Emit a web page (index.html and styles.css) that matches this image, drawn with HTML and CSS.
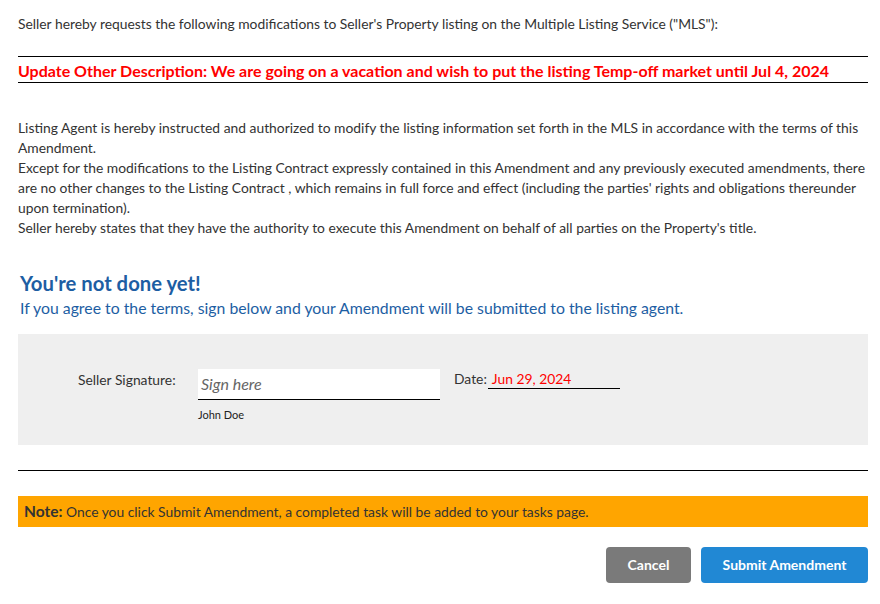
FILE: index.html
```html
<!DOCTYPE html>
<html>
<head>
<meta charset="utf-8">
<link rel="stylesheet" href="styles.css">
</head>
<body>
<div class="page">
  <p class="intro">Seller hereby requests the following modifications to Seller's Property listing on the Multiple Listing Service ("MLS"):</p>
  <div class="update">Update Other Description: We are going on a vacation and wish to put the listing Temp-off market until Jul 4, 2024</div>
  <div class="terms">
    <p>Listing Agent is hereby instructed and authorized to modify the listing information set forth in the MLS in accordance with the terms of this Amendment.</p>
    <p>Except for the modifications to the Listing Contract expressly contained in this Amendment and any previously executed amendments, there are no other changes to the Listing Contract , which remains in full force and effect (including the parties' rights and obligations thereunder upon termination).</p>
    <p>Seller hereby states that they have the authority to execute this Amendment on behalf of all parties on the Property's title.</p>
  </div>
  <h2 class="title">You're not done yet!</h2>
  <p class="subtitle">If you agree to the terms, sign below and your Amendment will be submitted to the listing agent.</p>
  <div class="signbox">
    <div class="sig-label">Seller Signature:</div>
    <div class="sig-field">
      <div class="sig-input">Sign here</div>
      <div class="sig-name">John Doe</div>
    </div>
    <div class="date-label">Date:</div>
    <div class="date-value">Jun 29, 2024</div>
  </div>
  <hr class="rule">
  <div class="note"><b>Note:</b> Once you click Submit Amendment, a completed task will be added to your tasks page.</div>
  <div class="actions">
    <button class="btn btn-cancel">Cancel</button>
    <button class="btn btn-submit">Submit Amendment</button>
  </div>
</div>
</body>
</html>
```

FILE: styles.css
```css
* { box-sizing: border-box; }
html, body { margin: 0; padding: 0; background: #fff; }
body {
  font-family: Lato, "Open Sans", sans-serif;
  color: #333;
  font-size: 13.85px;
}
.page {
  padding: 14px 12px 0 18px;
}
.intro {
  margin: 0;
  line-height: 20px;
  padding-bottom: 22px;
  border-bottom: 1px solid #000;
}
.update {
  color: #ff0000;
  font-weight: bold;
  font-size: 16px;
  line-height: 22px;
  padding-top: 3px;
  border-bottom: 1px solid #000;
}
.terms {
  margin-top: 35px;
  line-height: 20px;
}
.terms p { margin: 0; }
.title {
  margin: 32px 0 0 2px;
  font-size: 20.3px;
  line-height: 26px;
  font-weight: bold;
  color: #1d5ea3;
}
.subtitle {
  margin: 0 0 0 2px;
  font-size: 15.8px;
  line-height: 24px;
  color: #1d5ea3;
}
.signbox {
  margin-top: 14px;
  height: 111px;
  background: #efefef;
  display: flex;
  align-items: flex-start;
  padding: 35px 0 0 60px;
}
.sig-label {
  width: 120px;
  line-height: 20px;
  padding-top: 1px;
}
.sig-field {
  width: 242px;
}
.sig-input {
  height: 31px;
  background: #fff;
  border-bottom: 1px solid #000;
  font-style: italic;
  font-size: 16px;
  color: #666;
  padding: 5px 0 0 3px;
}
.sig-name {
  font-size: 11px;
  margin-top: 8px;
  color: #222;
}
.date-label {
  margin-left: 14px;
  line-height: 20px;
}
.date-value {
  margin-left: 1px;
  width: 132px;
  color: #ff0000;
  line-height: 19px;
  padding-left: 4px;
  border-bottom: 1px solid #000;
}
.rule {
  margin: 25px 0 0 0;
  border: 0;
  border-top: 1px solid #000;
  height: 0;
}
.note {
  margin-top: 25px;
  background: #ffa500;
  height: 31px;
  line-height: 31px;
  padding-left: 6px;
  color: #333;
}
.note b {
  font-size: 15.5px;
}
.actions {
  margin-top: 20px;
  display: flex;
  justify-content: flex-end;
  gap: 10px;
}
.btn {
  border: 0;
  border-radius: 4px;
  height: 36px;
  padding-bottom: 2px;
  font-family: Lato, sans-serif;
  font-weight: bold;
  font-size: 14px;
  color: #fff;
}
.btn-cancel {
  width: 85px;
  background: #7a7a7a;
}
.btn-submit {
  width: 167px;
  background: #2188d4;
}
```
